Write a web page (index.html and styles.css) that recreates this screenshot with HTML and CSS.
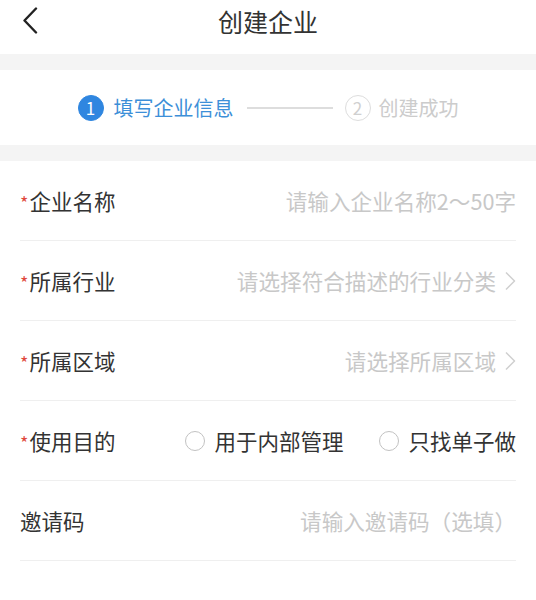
FILE: index.html
```html
<!DOCTYPE html>
<html lang="zh-CN">
<head>
  <meta charset="UTF-8">
  <meta name="viewport" content="width=device-width, initial-scale=1.0">
  <title>创建企业</title>
  <link rel="stylesheet" href="styles.css">
</head>
<body>
  <!-- Top bar -->
  <div class="header">
    <span class="back">
      <svg width="16" height="27" viewBox="0 0 16 27"><path d="M14 1.5 L2.5 13.5 L14 25.5" fill="none" stroke="#222" stroke-width="2.4" stroke-linecap="round" stroke-linejoin="round"/></svg>
    </span>
    <h1>创建企业</h1>
  </div>

  <div class="gap"></div>

  <!-- Steps -->
  <div class="steps">
    <div class="step active">
      <span class="num">1</span>
      <span class="step-text">填写企业信息</span>
    </div>
    <div class="step-line"></div>
    <div class="step">
      <span class="num">2</span>
      <span class="step-text">创建成功</span>
    </div>
  </div>

  <div class="gap"></div>

  <!-- Form -->
  <div class="form">
    <div class="row">
      <label class="label"><span class="req">*</span>企业名称</label>
      <span class="placeholder">请输入企业名称2～50字</span>
    </div>
    <div class="row">
      <label class="label"><span class="req">*</span>所属行业</label>
      <span class="placeholder">请选择符合描述的行业分类<span class="arrow"><svg width="12" height="20" viewBox="0 0 12 20"><path d="M2 1.5 L10.5 10 L2 18.5" fill="none" stroke="#cfcfcf" stroke-width="1.5" stroke-linejoin="round"/></svg></span></span>
    </div>
    <div class="row">
      <label class="label"><span class="req">*</span>所属区域</label>
      <span class="placeholder">请选择所属区域<span class="arrow"><svg width="12" height="20" viewBox="0 0 12 20"><path d="M2 1.5 L10.5 10 L2 18.5" fill="none" stroke="#cfcfcf" stroke-width="1.5" stroke-linejoin="round"/></svg></span></span>
    </div>
    <div class="row">
      <label class="label"><span class="req">*</span>使用目的</label>
      <div class="radios">
        <span class="radio"><span class="circle"></span>用于内部管理</span>
        <span class="radio"><span class="circle"></span>只找单子做</span>
      </div>
    </div>
    <div class="row">
      <label class="label">邀请码</label>
      <span class="placeholder">请输入邀请码（选填）</span>
    </div>
  </div>
</body>
</html>
```

FILE: styles.css
```css
body {
  font-family: "Noto Sans CJK SC", "Noto Sans", sans-serif;
  background-color: #ffffff;
  margin: 0;
  padding: 0;
  color: #333;
}

.header {
  height: 54px;
  display: flex;
  align-items: flex-start;
  justify-content: center;
  position: relative;
}

.header h1 {
  margin: 0;
  font-size: 25px;
  line-height: 43px;
  font-weight: normal;
  color: #333;
}

.back {
  position: absolute;
  left: 22px;
  top: 7px;
  display: flex;
}

.gap {
  height: 16px;
  background-color: #f4f4f4;
}

.steps {
  height: 75px;
  display: flex;
  align-items: center;
  justify-content: center;
}

.step {
  display: flex;
  align-items: center;
  color: #cccccc;
  font-size: 20px;
}

.step .num {
  width: 24px;
  height: 24px;
  border: 1.5px solid #dddddd;
  border-radius: 50%;
  display: flex;
  align-items: center;
  justify-content: center;
  font-size: 17px;
  margin-right: 8px;
  color: #d0d0d0;
}

.step.active {
  color: #3d8fd8;
}

.step.active .num {
  background-color: #2f86e0;
  border-color: #2f86e0;
  color: white;
  margin-right: 10px;
}

.step-line {
  width: 86px;
  height: 2px;
  background-color: #dddddd;
  margin: 0 12px 0 13px;
}

.form {
  padding: 0 20px;
}

.row {
  height: 79px;
  border-bottom: 1px solid #efefef;
  display: flex;
  align-items: center;
  justify-content: space-between;
}

.label {
  font-size: 21.5px;
  color: #333;
}

.req {
  color: #e0483c;
  font-size: 18px;
  margin-right: 1px;
}

.placeholder {
  font-size: 21.6px;
  color: #c8c8c8;
  display: flex;
  align-items: center;
}

.arrow {
  display: flex;
  margin-left: 8px;
}

.radios {
  display: flex;
  gap: 36px;
}

.radio {
  display: flex;
  align-items: center;
  font-size: 21.5px;
  color: #333;
}

.radio .circle {
  width: 18px;
  height: 18px;
  border: 1.5px solid #c2c2c2;
  border-radius: 50%;
  margin-right: 9px;
}
```
